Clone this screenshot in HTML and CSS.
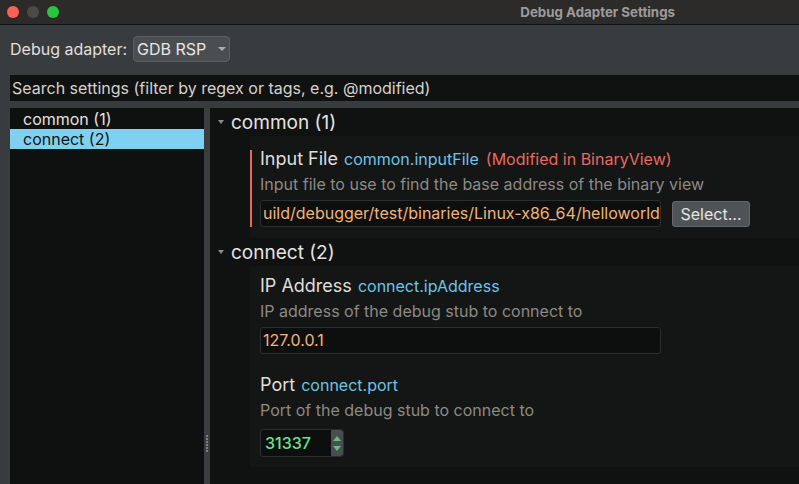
FILE: index.html
```html
<!DOCTYPE html>
<html lang="en">
<head>
<meta charset="UTF-8" />
<title>Debug Adapter Settings</title>
<link rel="stylesheet" href="styles.css">
</head>
<body>

<div class="titlebar">
  <span class="light light-close"></span>
  <span class="light light-min"></span>
  <span class="light light-max"></span>
  <span class="title">Debug Adapter Settings</span>
</div>

<div class="adapter-row">
  <span class="adapter-label">Debug adapter:</span>
  <div class="combo">GDB RSP <span class="caret"></span></div>
</div>

<div class="search">Search settings (filter by regex or tags, e.g. @modified)</div>

<div class="main">
  <ul class="groups">
    <li>common (1)</li>
    <li class="selected">connect (2)</li>
  </ul>

  <div class="splitter"><span class="grip"></span></div>

  <div class="settings">
    <div class="group-head"><span class="tri"></span>common (1)</div>
    <div class="card">
      <div class="setting modified">
        <div class="name">Input File <span class="key">common.inputFile</span> <span class="mod">(Modified in BinaryView)</span></div>
        <div class="desc">Input file to use to find the base address of the binary view</div>
        <div class="field-row">
          <div class="field text-field">uild/debugger/test/binaries/Linux-x86_64/helloworld</div>
          <button class="btn">Select...</button>
        </div>
      </div>
    </div>

    <div class="group-head"><span class="tri"></span>connect (2)</div>
    <div class="card card-connect">
      <div class="setting">
        <div class="name">IP Address <span class="key">connect.ipAddress</span></div>
        <div class="desc">IP address of the debug stub to connect to</div>
        <div class="field text-field">127.0.0.1</div>
      </div>
      <div class="setting">
        <div class="name">Port <span class="key">connect.port</span></div>
        <div class="desc">Port of the debug stub to connect to</div>
        <div class="spin">
          <span class="spin-value">31337</span>
          <span class="spin-buttons">
            <svg width="8" height="5" viewBox="0 0 8 5"><path d="M0 5 L4 0 L8 5 Z" fill="#5fbf7c"/></svg>
            <svg width="8" height="5" viewBox="0 0 8 5"><path d="M0 0 L4 5 L8 0 Z" fill="#5fbf7c"/></svg>
          </span>
        </div>
      </div>
    </div>
  </div>
</div>

</body>
</html>
```

FILE: styles.css
```css
html, body { margin: 0; padding: 0; }
body {
  width: 799px; height: 484px; overflow: hidden;
  background-color: #383c3e; color: #dcdcdc;
  font-family: Inter, "Liberation Sans", sans-serif;
}

/* window title bar */
.titlebar {
  display: flex; align-items: center; height: 24px;
  background-color: #2d2b2a; border-bottom: 1px solid #141414;
  padding-left: 7px;
}
.light { width: 12px; height: 12px; border-radius: 50%; margin-right: 8px; }
.light-close { background-color: #fe5f57; }
.light-min { background-color: #4b4a49; }
.light-max { background-color: #27c63f; }
.title { margin-left: auto; margin-right: 124px; font-size: 13.3px; font-weight: 700; color: #9d9b99; }

/* adapter selector */
.adapter-row { display: flex; align-items: center; padding: 11px 0 13px 10px; }
.adapter-label { font-size: 16px; color: #e2dfdc; margin-right: 6px; }
.combo {
  display: flex; align-items: center; width: 92px; height: 24px; padding-left: 3px;
  background-color: #4a4e50; border: 1px solid #5b5f61; border-radius: 4px;
  font-size: 16px; color: #e8e6e4; box-sizing: content-box;
}
.caret { width: 0; height: 0; margin-left: 12px; border-left: 4px solid transparent; border-right: 4px solid transparent; border-top: 4px solid #a9abac; }

.search {
  margin-left: 10px; height: 26px; line-height: 26px; padding-left: 2px;
  background-color: #101212; color: #d6d1cc; font-size: 16px;
}

/* main split */
.main { display: flex; margin-top: 7px; height: 376px; padding-left: 10px; }
.groups {
  list-style: none; margin: 0; padding: 1px 0 0; width: 194px;
  background-color: #0f1111; font-size: 16px;
}
.groups li { height: 20px; line-height: 20px; padding-left: 13px; color: #e4e1de; }
.groups li.selected { background-color: #80d1f1; color: #151515; }

.splitter { width: 6px; position: relative; background-color: #3a3e40; }
.grip {
  position: absolute; left: 2px; top: 327px; width: 2px; height: 17px;
  background: repeating-linear-gradient(#7d7f80 0 2px, transparent 2px 3px);
}

.settings { flex: 1; background-color: #101212; }
.group-head {
  display: flex; align-items: center; height: 28px; padding-left: 8px;
  font-size: 19px; color: #e6e3e0;
}
.tri { width: 0; height: 0; margin-right: 7px; border-left: 3.5px solid transparent; border-right: 3.5px solid transparent; border-top: 4px solid #8c8c8c; }
.card { margin-left: 40px; padding: 14px 0 11px; background-color: #141616; }
.card-connect { padding: 11px 0 10px; }
.setting { padding-left: 8px; border-left: 2px solid transparent; }
.setting + .setting { margin-top: 22px; }
.setting.modified { border-left-color: #e8695d; }

.name { height: 18px; font-size: 18px; line-height: 18px; color: #e0dedc; }
.key { font-size: 16px; color: #6cc4e8; margin-left: 1px; }
.mod { font-size: 16px; color: #e9695e; margin-left: 2px; }
.desc { font-size: 16px; line-height: 20px; margin-top: 6px; color: #8d8985; }

.field-row { display: flex; align-items: center; }
.field {
  margin-top: 6px; height: 25px; line-height: 25px; padding-left: 2px;
  border: 1px solid #2b2d2e; border-radius: 3px; background-color: #0d0f0f;
  font-size: 16px; color: #f2b377;
}
.text-field { width: 397px; white-space: nowrap; overflow: hidden; }
.btn {
  margin: 6px 0 0 11px; width: 78px; height: 26px; padding: 0;
  background-color: #505356; border: 1px solid #66696b; border-radius: 3px;
  font-family: inherit; font-size: 16px; color: #e6e4e2;
}

.spin {
  display: flex; margin-top: 9px; width: 82px; height: 26px;
  border: 1px solid #2b2d2e; border-radius: 3px; background-color: #0d0f0f;
}
.spin-value { flex: 1; line-height: 26px; padding-left: 4px; font-size: 16px; font-weight: 500; color: #6fe08f; }
.spin-buttons {
  display: flex; flex-direction: column; justify-content: space-around; align-items: center;
  width: 12px; padding: 3px 0; background-color: #4b4e50; border-radius: 0 3px 3px 0;
}
```
